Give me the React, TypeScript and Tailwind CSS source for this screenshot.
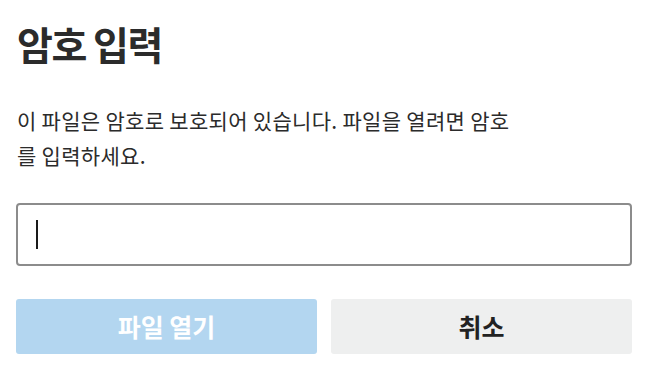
import React from "react";

export default function App() {
  const font = { fontFamily: '"Noto Sans CJK KR", "Noto Sans", sans-serif' };
  return (
    <div className="w-[651px] h-[378px] bg-white overflow-hidden" style={font}>
      <div className="pl-[17px] pr-[20px] pt-[20px]">
        <h1 className="text-[39px] leading-[46px] font-bold tracking-[-1.5px] text-[#2b2b2b]">암호 입력</h1>
        <p className="mt-[37px] text-[21px] leading-[35px] tracking-[0.3px] text-[#2b2b2b]">
          이 파일은 암호로 보호되어 있습니다. 파일을 열려면 암호
          <br />를 입력하세요.
        </p>
      </div>
      <div className="pl-[16px] pr-[19px] mt-[30px]">
        <div className="h-[63px] border-2 border-[#8c8c8c] rounded-[4px] flex items-center pl-[18px]">
          <div className="w-[2px] h-[29px] bg-[#1a1a1a]" />
        </div>
        <div className="mt-[33px] flex gap-[14px]">
          <button className="flex-1 h-[55px] rounded-[3px] bg-[#b3d6f0] text-white text-[25px] font-bold">
            파일 열기
          </button>
          <button className="flex-1 h-[55px] rounded-[3px] bg-[#eeefef] text-[#222] text-[25px] font-bold">
            취소
          </button>
        </div>
      </div>
    </div>
  );
}
